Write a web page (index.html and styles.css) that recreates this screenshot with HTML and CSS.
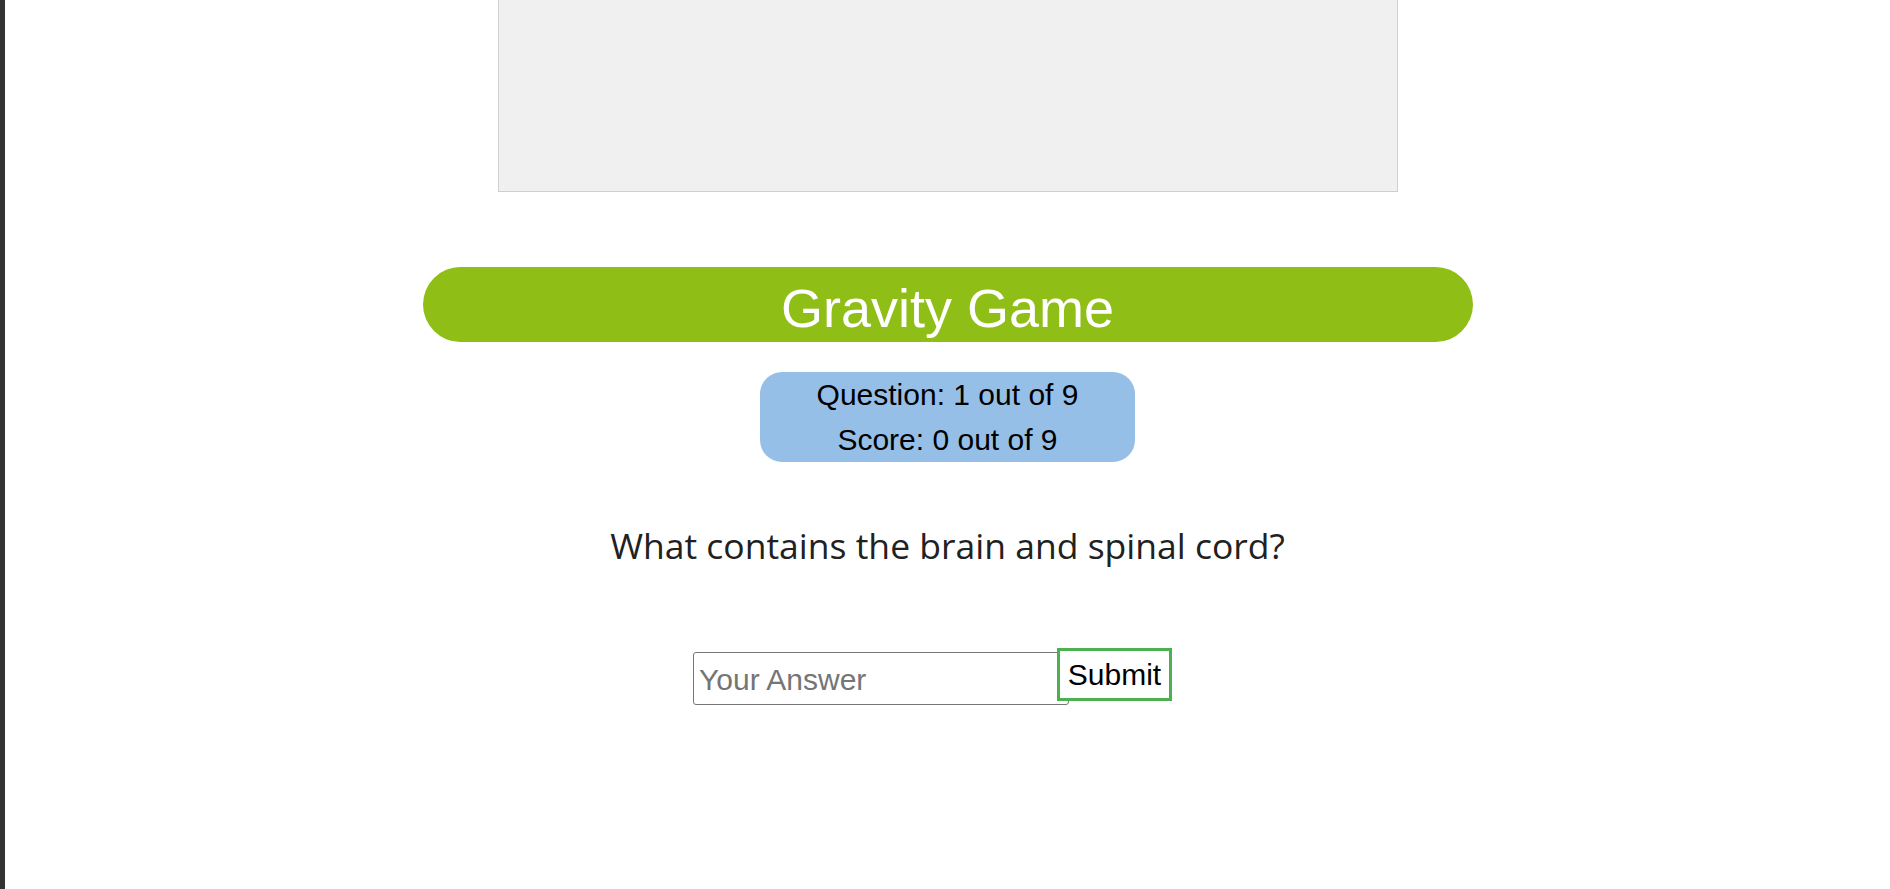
FILE: index.html
```html
<!DOCTYPE html>
<html lang="en">
<head>
<meta charset="utf-8">
<title>Gravity Game</title>
<link rel="stylesheet" href="styles.css">
</head>
<body>
  <main class="page">
    <div class="canvas-box"></div>
    <h1 class="title">Gravity Game</h1>
    <div class="stats">
      <div class="stat">Question: 1 out of 9</div>
      <div class="stat">Score: 0 out of 9</div>
    </div>
    <p class="question">What contains the brain and spinal cord?</p>
    <form class="answer-row">
      <input class="answer" type="text" placeholder="Your Answer">
      <button class="submit" type="button">Submit</button>
    </form>
  </main>
</body>
</html>
```
FILE: styles.css
```css
html, body {
  margin: 0;
  padding: 0;
}
body {
  background: #ffffff;
  font-family: "Liberation Sans", Arial, sans-serif;
  border-left: 5px solid #333333;
  box-sizing: border-box;
  min-height: 889px;
  overflow: hidden;
}
.page {
  display: flex;
  flex-direction: column;
  align-items: center;
}
.canvas-box {
  width: 900px;
  height: 192px;
  box-sizing: border-box;
  background: #f0f0f0;
  border: 1px solid #cfcfcf;
  border-top: none;
}
.title {
  margin: 75px 0 0;
  width: 1050px;
  height: 75px;
  box-sizing: border-box;
  padding-top: 6px;
  background: #8fbe16;
  border-radius: 38px;
  color: #ffffff;
  font-size: 54px;
  font-weight: normal;
  display: flex;
  align-items: center;
  justify-content: center;
}
.stats {
  margin-top: 30px;
  width: 375px;
  height: 90px;
  background: #96bfe8;
  border-radius: 22px;
  font-size: 30px;
  line-height: 45px;
  text-align: center;
  color: #000000;
}
.question {
  margin: 65px 0 0;
  font-family: "Open Sans", sans-serif;
  font-size: 35.5px;
  line-height: 36px;
  color: #212121;
}
.answer-row {
  margin: 85px 0 0;
  display: flex;
  align-items: flex-start;
  padding-right: 30px;
}
.answer {
  margin: 4px 0 0;
  width: 376px;
  height: 53px;
  box-sizing: border-box;
  border: 1px solid #767676;
  border-radius: 3px;
  padding: 2px 5px 0;
  font: 30px "Liberation Sans", Arial, sans-serif;
  color: #000000;
  background: #ffffff;
}
.answer::placeholder {
  color: #757575;
}
.submit {
  margin-left: -12px;
  width: 115px;
  height: 53px;
  box-sizing: border-box;
  border: 3px solid #4caf50;
  background: #ffffff;
  padding: 0;
  font: 30px "Liberation Sans", Arial, sans-serif;
  color: #000000;
}
```
